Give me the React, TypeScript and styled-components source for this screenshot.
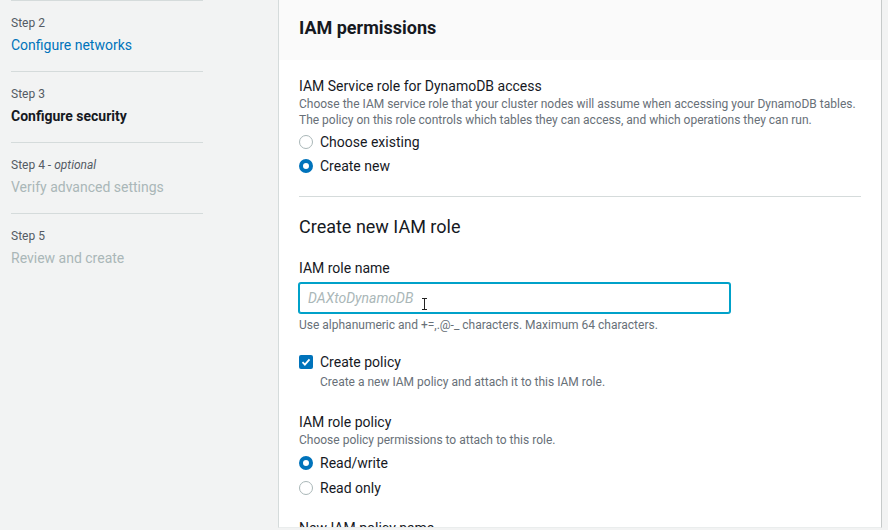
import React from "react";
import styled, { createGlobalStyle, css } from "styled-components";

const Global = createGlobalStyle`
  html, body { margin: 0; padding: 0; }
  body {
    background: #f2f3f3;
    font-family: Roboto, "Noto Sans", Arial, sans-serif;
    color: #16191f;
    overflow: hidden;
  }
  * { box-sizing: border-box; }
`;

const Page = styled.div`
  display: flex;
  width: 888px;
  height: 530px;
  overflow: hidden;
  background: #f2f3f3;
`;

const Sidebar = styled.nav`
  width: 278px;
  flex: none;
  padding-left: 11px;
`;

const StepList = styled.ol`
  list-style: none;
  margin: 0;
  padding: 0;
  width: 192px;
`;

const StepItem = styled.li`
  border-top: 1px solid #d5dbdb;
  padding: 14px 0 15px;
  display: flex;
  flex-direction: column;
  gap: 4px;
`;

const StepLabel = styled.span`
  font-size: 12px;
  line-height: 16px;
  color: #545b64;
  em { font-style: italic; }
`;

type StepState = "link" | "current" | "disabled";

const StepTitle = styled.span<{ $state: StepState }>`
  font-size: 14px;
  line-height: 21px;
  ${(p) =>
    p.$state === "link" &&
    css`
      color: #0073bb;
    `}
  ${(p) =>
    p.$state === "current" &&
    css`
      color: #16191f;
      font-weight: 700;
    `}
  ${(p) =>
    p.$state === "disabled" &&
    css`
      color: #aab7b8;
    `}
`;

const Panel = styled.section`
  width: 604px;
  flex: none;
  background: #fff;
  border-left: 1px solid #d5dbdb;
  border-right: 1px solid #c6caca;
  border-bottom: 1px solid #eaeded;
  height: 528px;
  overflow: hidden;
`;

const PanelHeader = styled.header`
  background: #fafafa;
  height: 60px;
  padding: 17px 20px 0;
`;

const PanelTitle = styled.h2`
  margin: 0;
  font-size: 18px;
  line-height: 22px;
  font-weight: 700;
  color: #16191f;
`;

const PanelBody = styled.div`
  padding: 16px 20px 0;
  display: flex;
  flex-direction: column;
`;

const FieldLabel = styled.div`
  font-size: 14px;
  line-height: 20px;
  color: #16191f;
`;

const Description = styled.div<{ $indent?: boolean }>`
  font-size: 12px;
  line-height: 16px;
  color: #687078;
  padding-left: ${(p) => (p.$indent ? "21px" : "0")};
`;

const RadioGroup = styled.div<{ $step?: number }>`
  display: flex;
  flex-direction: column;
  margin-top: 2px;
  & > label { height: ${(p) => p.$step ?? 24}px; }
`;

const OptionRow = styled.label`
  display: flex;
  align-items: center;
  gap: 7px;
  height: 24px;
  font-size: 14px;
  color: #16191f;
`;

const RadioDot = styled.span<{ $checked?: boolean }>`
  width: 14px;
  height: 14px;
  border-radius: 50%;
  flex: none;
  ${(p) =>
    p.$checked
      ? css`
          border: 4px solid #0073bb;
          background: #fff;
        `
      : css`
          border: 1px solid #aab7b8;
          background: #fff;
        `}
`;

const CheckBox = styled.span`
  width: 14px;
  height: 14px;
  border-radius: 2px;
  background: #0073bb;
  flex: none;
  display: flex;
  align-items: center;
  justify-content: center;
`;

const Divider = styled.hr`
  border: none;
  border-top: 1px solid #d5dbdb;
  margin: 18px 0 0;
  width: 100%;
`;

const SectionTitle = styled.h3`
  margin: 19px 0 0;
  font-size: 18px;
  line-height: 22px;
  font-weight: 400;
  color: #16191f;
`;

const Field = styled.div<{ $gap?: number }>`
  margin-top: ${(p) => p.$gap ?? 20}px;
  display: flex;
  flex-direction: column;
`;

const InputWrap = styled.div`
  position: relative;
  width: 431px;
  margin-top: 5px;
`;

const TextInput = styled.input`
  width: 100%;
  height: 30px;
  border: 1px solid #00a1c9;
  box-shadow: 0 0 0 1px #00a1c9;
  border-radius: 2px;
  padding: 0 8px;
  font-family: inherit;
  font-size: 14px;
  outline: none;
  background: #fff;
  &::placeholder {
    color: #aab7b8;
    font-style: italic;
  }
`;

const Cursor = styled.svg`
  position: absolute;
  left: 122px;
  top: 15px;
`;

const Hint = styled.div`
  margin-top: 4px;
  font-size: 12px;
  line-height: 16px;
  color: #687078;
`;

const CheckField = styled.div`
  margin-top: 17px;
  display: flex;
  flex-direction: column;
`;

const App: React.FC = () => (
  <>
    <Global />
    <Page>
      <Sidebar>
        <StepList>
          <StepItem>
            <StepLabel>Step 2</StepLabel>
            <StepTitle $state="link">Configure networks</StepTitle>
          </StepItem>
          <StepItem>
            <StepLabel>Step 3</StepLabel>
            <StepTitle $state="current">Configure security</StepTitle>
          </StepItem>
          <StepItem>
            <StepLabel>
              Step 4 - <em>optional</em>
            </StepLabel>
            <StepTitle $state="disabled">Verify advanced settings</StepTitle>
          </StepItem>
          <StepItem>
            <StepLabel>Step 5</StepLabel>
            <StepTitle $state="disabled">Review and create</StepTitle>
          </StepItem>
        </StepList>
      </Sidebar>
      <Panel>
        <PanelHeader>
          <PanelTitle>IAM permissions</PanelTitle>
        </PanelHeader>
        <PanelBody>
          <FieldLabel>IAM Service role for DynamoDB access</FieldLabel>
          <Description>
            Choose the IAM service role that your cluster nodes will assume when accessing your DynamoDB tables. The
            policy on this role controls which tables they can access, and which operations they can run.
          </Description>
          <RadioGroup>
            <OptionRow>
              <RadioDot />
              Choose existing
            </OptionRow>
            <OptionRow>
              <RadioDot $checked />
              Create new
            </OptionRow>
          </RadioGroup>
          <Divider />
          <SectionTitle>Create new IAM role</SectionTitle>
          <Field>
            <FieldLabel>IAM role name</FieldLabel>
            <InputWrap>
              <TextInput placeholder="DAXtoDynamoDB" readOnly />
              <Cursor width="7" height="12" viewBox="0 0 7 12">
                <path d="M1 0.5h5M1 11.5h5M3.5 0.5v11" stroke="#222" strokeWidth="1" fill="none" />
              </Cursor>
            </InputWrap>
            <Hint>Use alphanumeric and +=,.@-_ characters. Maximum 64 characters.</Hint>
          </Field>
          <CheckField>
            <OptionRow>
              <CheckBox>
                <svg width="10" height="10" viewBox="0 0 10 10">
                  <path d="M1.5 5.2l2.4 2.4 4.6-5.2" stroke="#fff" strokeWidth="1.8" fill="none" />
                </svg>
              </CheckBox>
              Create policy
            </OptionRow>
            <Description $indent>Create a new IAM policy and attach it to this IAM role.</Description>
          </CheckField>
          <Field $gap={22}>
            <FieldLabel>IAM role policy</FieldLabel>
            <Description>Choose policy permissions to attach to this role.</Description>
            <RadioGroup $step={25}>
              <OptionRow>
                <RadioDot $checked />
                Read/write
              </OptionRow>
              <OptionRow>
                <RadioDot />
                Read only
              </OptionRow>
            </RadioGroup>
          </Field>
          <Field $gap={18}>
            <FieldLabel>New IAM policy name</FieldLabel>
          </Field>
        </PanelBody>
      </Panel>
    </Page>
  </>
);

export default App;
